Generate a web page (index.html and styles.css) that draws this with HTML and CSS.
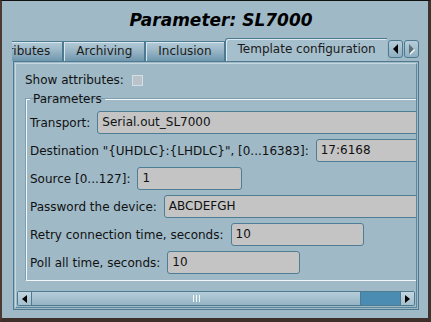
FILE: index.html
```html
<!DOCTYPE html>
<html lang="en">
  <head>
    <meta charset="UTF-8" />
    <title>Parameter: SL7000</title>
    <link rel="stylesheet" href="styles.css">
  </head>
  <body>
    <div class="window">
      <div class="title">Parameter: SL7000</div>

      <div class="tabbar">
        <div class="tabs">
          <div class="tab first">Attributes</div>
          <div class="tab">Archiving</div>
          <div class="tab">Inclusion</div>
          <div class="tab active">Template configuration</div>
        </div>
        <div class="tab-arrows">
          <span class="arrow-btn"><span class="tri left"></span></span>
          <span class="arrow-btn"><span class="tri right dim"></span></span>
        </div>
      </div>

      <div class="panel">
        <div class="scroll-area">
          <div class="viewport">
            <div class="show-attrs">
              <span>Show attributes:</span>
              <span class="checkbox"></span>
            </div>

            <fieldset class="group">
              <legend>Parameters</legend>
              <div class="row">
                <label>Transport:</label>
                <div class="field wide">Serial.out_SL7000</div>
              </div>
              <div class="row">
                <label>Destination "{UHDLC}:{LHDLC}", [0...16383]:</label>
                <div class="field wide">17:6168</div>
              </div>
              <div class="row">
                <label>Source [0...127]:</label>
                <div class="field w105">1</div>
              </div>
              <div class="row">
                <label>Password the device:</label>
                <div class="field wide">ABCDEFGH</div>
              </div>
              <div class="row">
                <label>Retry connection time, seconds:</label>
                <div class="field w132">10</div>
              </div>
              <div class="row">
                <label>Poll all time, seconds:</label>
                <div class="field w132">10</div>
              </div>
            </fieldset>
          </div>

          <div class="hscroll">
            <span class="sb-btn"><span class="tri left small"></span></span>
            <span class="sb-thumb"><span class="grip"></span></span>
            <span class="sb-trough"></span>
            <span class="sb-btn"><span class="tri right small"></span></span>
          </div>
        </div>
      </div>
    </div>
  </body>
</html>
```

FILE: styles.css
```css
body {
  margin: 0;
  padding: 0;
  font-family: "DejaVu Sans", sans-serif;
  font-size: 12px;
  color: #111;
}

.window {
  box-sizing: border-box;
  width: 431px;
  height: 322px;
  background: #9fb9c7;
  border-top: 1px solid #111;
  border-left: 2px solid #4a3a30;
  border-right: 3px solid #3e342e;
  border-bottom: 4px solid #3e3029;
  overflow: hidden;
}

.title {
  height: 37px;
  line-height: 38px;
  padding-left: 12px;
  text-align: center;
  font-size: 17px;
  font-weight: bold;
  font-style: italic;
  color: #000;
}

/* tabs */
.tabbar {
  display: flex;
  align-items: flex-end;
  height: 23px;
  margin-left: 10px;
}

.tabs {
  display: flex;
  align-items: flex-end;
  width: 375px;
  overflow: hidden;
}

.tab {
  flex: none;
  box-sizing: border-box;
  height: 20px;
  line-height: 18px;
  padding: 0 12px;
  font-size: 12px;
  color: #1a1a1a;
  background: linear-gradient(#b3cbd8, #9ab6c6 45%, #6f97ae);
  border: 1px solid #4e7a91;
  border-bottom: none;
  box-shadow: inset 1px 1px 0 #d8e6ee;
}

.tab.first {
  margin-left: -34px;
}

.tab.active {
  height: 23px;
  line-height: 21px;
  background: #a5bfcd;
  border-radius: 3px 3px 0 0;
  box-shadow: inset 1px 1px 0 #dce9f0;
}

.tab-arrows {
  display: flex;
  gap: 1px;
  margin-left: 1px;
  margin-bottom: 3px;
}

.arrow-btn {
  box-sizing: border-box;
  width: 15px;
  height: 18px;
  display: flex;
  align-items: center;
  justify-content: center;
  background: linear-gradient(#b6cdd9, #8fb0c2);
  border: 1px solid #4e7a91;
  border-radius: 3px;
}

.tri {
  width: 0;
  height: 0;
  border-top: 5px solid transparent;
  border-bottom: 5px solid transparent;
}

.tri.left {
  border-right: 5px solid #000;
}

.tri.right {
  border-left: 5px solid #000;
}

.tri.right.dim {
  border-left-color: #5f6f78;
  filter: drop-shadow(1px 1px 0 #fff);
}

.tri.small {
  border-top-width: 4px;
  border-bottom-width: 4px;
}

/* panel */
.panel {
  box-sizing: border-box;
  width: 406px;
  height: 249px;
  margin-left: 11px;
  border: 1px solid #4d7a91;
  padding: 1px;
}

.scroll-area {
  box-sizing: border-box;
  height: 245px;
  border: 1px solid #c5d8e2;
  border-right-color: #5b879d;
  border-bottom-color: #5b879d;
  display: flex;
  flex-direction: column;
}

.viewport {
  height: 227px;
  overflow: hidden;
  padding-left: 9px;
}

.show-attrs {
  display: flex;
  align-items: center;
  gap: 8px;
  height: 16px;
  margin-top: 8px;
}

.checkbox {
  box-sizing: border-box;
  width: 11px;
  height: 11px;
  background: #b9c3c9;
  border: 1px solid #d4dfe5;
}

.group {
  box-sizing: border-box;
  width: 430px;
  margin: 4px 0 0 1px;
  padding: 5px 0 3px 3px;
  border: 1px solid #f2f7fa;
  border-right: none;
  box-shadow: -1px -1px 0 #7f9fb0;
}

.group legend {
  padding: 0 3px;
  margin-left: 0;
  color: #111;
}

.row {
  display: flex;
  align-items: center;
  gap: 7px;
  height: 23px;
  margin-bottom: 5px;
}

.row:last-child {
  margin-bottom: 3px;
}

.row label {
  flex: none;
  white-space: nowrap;
}

.field {
  box-sizing: border-box;
  height: 23px;
  line-height: 21px;
  padding-left: 4px;
  background: #c4c4c4;
  border: 1px solid #4e7d94;
  border-radius: 3px;
  color: #111;
  white-space: nowrap;
}

.field.wide {
  flex: 1;
}

.field.w105 {
  width: 105px;
}

.field.w132 {
  width: 133px;
}

/* horizontal scrollbar */
.hscroll {
  display: flex;
  height: 13px;
  width: 396px;
  margin-left: 1px;
  border: 1px solid #4d7a91;
  border-radius: 2px;
}

.sb-btn {
  box-sizing: border-box;
  flex: none;
  width: 14px;
  display: flex;
  align-items: center;
  justify-content: center;
  background: linear-gradient(#c3d6e0, #a4bfcd);
}

.sb-btn:first-child {
  border-right: 1px solid #4d7a91;
}

.sb-btn:last-child {
  border-left: 1px solid #4d7a91;
}

.sb-thumb {
  flex: none;
  width: 328px;
  display: flex;
  align-items: center;
  justify-content: center;
  background: linear-gradient(#b6cdd9, #94b3c4);
  border-right: 1px solid #4d7a91;
}

.grip {
  width: 7px;
  height: 7px;
  background: repeating-linear-gradient(90deg, #f2f7fa 0 1px, transparent 1px 3px);
}

.sb-trough {
  flex: 1;
  background: #4b8db2;
}
```
